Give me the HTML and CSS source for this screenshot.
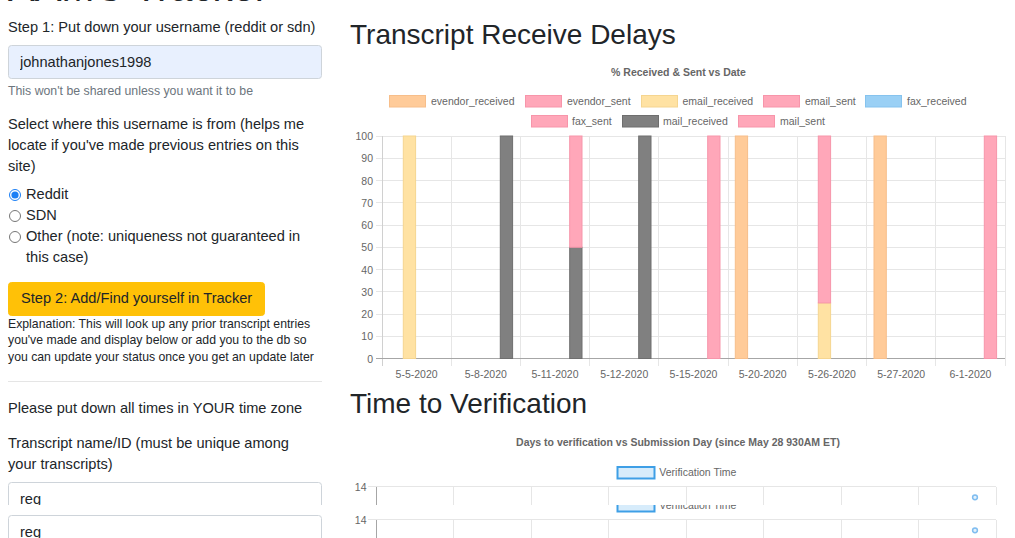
FILE: index.html
```html
<!DOCTYPE html>
<html lang="en">
<head>
<meta charset="utf-8">
<title>AAMC Tracker</title>
<link rel="stylesheet" href="styles.css">
</head>
<body>
<div class="viewport">
  <div class="page">
    <div class="col-left">
      <h1 class="site-title">AAMC Tracker</h1>
      <div class="form-group">
        <label class="lbl">Step 1: Put down your username (reddit or sdn)</label>
        <input class="form-control autofill" type="text" value="johnathanjones1998">
        <small class="form-text">This won't be shared unless you want it to be</small>
      </div>
      <div class="form-group">
        <label class="lbl">Select where this username is from (helps me locate if you've made previous entries on this site)</label>
        <div class="form-check"><input type="radio" name="src" checked><span>Reddit</span></div>
        <div class="form-check"><input type="radio" name="src"><span>SDN</span></div>
        <div class="form-check"><input type="radio" name="src"><span>Other (note: uniqueness not guaranteed in this case)</span></div>
      </div>
      <button class="btn btn-warning" type="button">Step 2: Add/Find yourself in Tracker</button>
      <p class="explain">Explanation: This will look up any prior transcript entries you've made and display below or add you to the db so you can update your status once you get an update later</p>
      <hr class="divider">
      <p class="note">Please put down all times in YOUR time zone</p>
      <label class="lbl narrow">Transcript name/ID (must be unique among your transcripts)</label>
      <input class="form-control" type="text" value="reg">
    </div>
    <div class="col-right">
      <h2 class="section-title first">Transcript Receive Delays</h2>
      <svg class="chart chart1" width="665" height="330" viewBox="0 0 665 330" xmlns="http://www.w3.org/2000/svg">
        <text class="c-title" x="328.5" y="17" text-anchor="middle">% Received &amp; Sent vs Date</text>
        <g class="legend">
          <rect x="39.5" y="40.5" width="36" height="11.5" fill="#ffcb99" stroke="#f7be8a"/>
          <text x="81" y="46">evendor_received</text>
          <rect x="175.5" y="40.5" width="36" height="11.5" fill="#ffa7b9" stroke="#f795aa"/>
          <text x="217" y="46">evendor_sent</text>
          <rect x="291.5" y="40.5" width="36" height="11.5" fill="#ffe2a3" stroke="#f5d590"/>
          <text x="332.5" y="46">email_received</text>
          <rect x="413.5" y="40.5" width="36" height="11.5" fill="#ffa7b9" stroke="#f795aa"/>
          <text x="455" y="46">email_sent</text>
          <rect x="515.5" y="40.5" width="36" height="11.5" fill="#9ad0f5" stroke="#86c3ee"/>
          <text x="557" y="46">fax_received</text>
          <rect x="181.5" y="60.5" width="36" height="11.5" fill="#ffa7b9" stroke="#f795aa"/>
          <text x="222" y="66">fax_sent</text>
          <rect x="272.5" y="60.5" width="36" height="11.5" fill="#808080" stroke="#6e6e6e"/>
          <text x="313" y="66">mail_received</text>
          <rect x="388.5" y="60.5" width="36" height="11.5" fill="#ffa7b9" stroke="#f795aa"/>
          <text x="430" y="66">mail_sent</text>
        </g>
        <g class="grid" shape-rendering="crispEdges">
          <line x1="26" y1="81" x2="655" y2="81"/>
          <line x1="26" y1="103.25" x2="655" y2="103.25"/>
          <line x1="26" y1="125.5" x2="655" y2="125.5"/>
          <line x1="26" y1="147.75" x2="655" y2="147.75"/>
          <line x1="26" y1="170" x2="655" y2="170"/>
          <line x1="26" y1="192.25" x2="655" y2="192.25"/>
          <line x1="26" y1="214.5" x2="655" y2="214.5"/>
          <line x1="26" y1="236.75" x2="655" y2="236.75"/>
          <line x1="26" y1="259" x2="655" y2="259"/>
          <line x1="26" y1="281.25" x2="655" y2="281.25"/>
          <line x1="101.2" y1="81" x2="101.2" y2="311"/>
          <line x1="170.4" y1="81" x2="170.4" y2="311"/>
          <line x1="239.7" y1="81" x2="239.7" y2="311"/>
          <line x1="308.9" y1="81" x2="308.9" y2="311"/>
          <line x1="378.1" y1="81" x2="378.1" y2="311"/>
          <line x1="447.3" y1="81" x2="447.3" y2="311"/>
          <line x1="516.6" y1="81" x2="516.6" y2="311"/>
          <line x1="585.8" y1="81" x2="585.8" y2="311"/>
          <line x1="655" y1="81" x2="655" y2="311"/>
          <line class="axis" x1="32" y1="81" x2="32" y2="311"/>
          <line class="zero" x1="26" y1="303.5" x2="655" y2="303.5"/>
        </g>
        <g class="ylabels" text-anchor="end">
          <text x="23" y="81">100</text>
          <text x="23" y="103.25">90</text>
          <text x="23" y="125.5">80</text>
          <text x="23" y="147.75">70</text>
          <text x="23" y="170">60</text>
          <text x="23" y="192.25">50</text>
          <text x="23" y="214.5">40</text>
          <text x="23" y="236.75">30</text>
          <text x="23" y="259">20</text>
          <text x="23" y="281.25">10</text>
          <text x="23" y="303.5">0</text>
        </g>
        <g class="bars">
          <rect x="53.3" y="81" width="12.3" height="222.5" fill="#ffe2a3" stroke="#f5d590"/>
          <rect x="150.3" y="81" width="12.3" height="222.5" fill="#808080" stroke="#6e6e6e"/>
          <rect x="219.7" y="192.25" width="12.3" height="111.25" fill="#808080" stroke="#6e6e6e"/>
          <rect x="219.7" y="81" width="12.3" height="111.25" fill="#ffa7b9" stroke="#f795aa"/>
          <rect x="288.7" y="81" width="12.3" height="222.5" fill="#808080" stroke="#6e6e6e"/>
          <rect x="357.7" y="81" width="12.3" height="222.5" fill="#ffa7b9" stroke="#f795aa"/>
          <rect x="385.3" y="81" width="12.3" height="222.5" fill="#ffcb99" stroke="#f7be8a"/>
          <rect x="468.3" y="247.9" width="12.3" height="55.6" fill="#ffe2a3" stroke="#f5d590"/>
          <rect x="468.3" y="81" width="12.3" height="166.9" fill="#ffa7b9" stroke="#f795aa"/>
          <rect x="524" y="81" width="12.3" height="222.5" fill="#ffcb99" stroke="#f7be8a"/>
          <rect x="634.3" y="81" width="12.3" height="222.5" fill="#ffa7b9" stroke="#f795aa"/>
        </g>
        <g class="xlabels" text-anchor="middle">
          <text x="66.6" y="319">5-5-2020</text>
          <text x="135.8" y="319">5-8-2020</text>
          <text x="205" y="319">5-11-2020</text>
          <text x="274.3" y="319">5-12-2020</text>
          <text x="343.5" y="319">5-15-2020</text>
          <text x="412.7" y="319">5-20-2020</text>
          <text x="482" y="319">5-26-2020</text>
          <text x="551.2" y="319">5-27-2020</text>
          <text x="620.4" y="319">6-1-2020</text>
        </g>
      </svg>
      <h2 class="section-title">Time to Verification</h2>
      <svg class="chart chart2" width="665" height="80" viewBox="0 0 665 80" xmlns="http://www.w3.org/2000/svg">
        <g id="c2">
          <text class="c-title" x="328" y="17.3" text-anchor="middle">Days to verification vs Submission Day (since May 28 930AM ET)</text>
          <rect x="267.5" y="42" width="37" height="11.5" fill="#d7ecfb" stroke="#3e9fe6" stroke-width="2"/>
          <text class="lg" x="309.3" y="47">Verification Time</text>
          <g class="grid" shape-rendering="crispEdges">
            <line x1="18" y1="61.5" x2="646" y2="61.5"/>
            <line x1="103.5" y1="61.5" x2="103.5" y2="120"/>
            <line x1="181" y1="61.5" x2="181" y2="120"/>
            <line x1="258.5" y1="61.5" x2="258.5" y2="120"/>
            <line x1="336" y1="61.5" x2="336" y2="120"/>
            <line x1="413.5" y1="61.5" x2="413.5" y2="120"/>
            <line x1="491" y1="61.5" x2="491" y2="120"/>
            <line x1="568.5" y1="61.5" x2="568.5" y2="120"/>
            <line x1="646" y1="61.5" x2="646" y2="120"/>
            <line class="axis2" x1="26" y1="61.5" x2="26" y2="120"/>
          </g>
          <text class="ylab2" x="16.5" y="62" text-anchor="end">14</text>
          <circle cx="625" cy="72.3" r="2.4" fill="#e3f1fc" stroke="#7fbdf0" stroke-width="1.5"/>
        </g>
      </svg>
    </div>
  </div>
  <div class="page replay">
    <div class="col-left">
      <input class="form-control replay-input" type="text" value="reg">
    </div>
    <div class="col-right">
      <svg class="chart" width="665" height="33" viewBox="0 47 665 33" xmlns="http://www.w3.org/2000/svg" xmlns:xlink="http://www.w3.org/1999/xlink">
        <use href="#c2" xlink:href="#c2"/>
      </svg>
    </div>
  </div>
</div>
</body>
</html>
```

FILE: styles.css
```css
* { box-sizing: border-box; }

html, body {
  margin: 0;
  padding: 0;
  background: #fff;
}

body {
  font-family: "Liberation Sans", Arial, Helvetica, sans-serif;
  font-size: 14.6px;
  line-height: 21px;
  color: #212529;
}

.viewport {
  width: 1015px;
  height: 538px;
  overflow: hidden;
}

.page {
  display: flex;
  gap: 28px;
  padding-left: 8px;
  height: 505px;
  overflow: hidden;
}

.page.replay {
  height: 33px;
}

.col-left {
  width: 314px;
  flex: none;
}

.col-right {
  width: 665px;
  flex: none;
}

.site-title {
  font-size: 40px;
  line-height: 48px;
  font-weight: 500;
  margin: -37.5px 0 6px;
  height: 48px;
}

.form-group {
  margin-bottom: 14px;
}

.lbl {
  display: block;
  margin-bottom: 7px;
}

.lbl.narrow {
  max-width: 300px;
}

.form-control {
  display: block;
  width: 100%;
  height: 34px;
  padding: 0 11px;
  font: inherit;
  color: #212529;
  background: #fff;
  border: 1px solid #ced4da;
  border-radius: 3.5px;
  outline: none;
}

.form-control.autofill {
  background: #e8f0fe;
}

.replay-input {
  margin-top: 10px;
}

.form-text {
  display: block;
  margin-top: 3.5px;
  font-size: 12.3px;
  line-height: 18px;
  color: #6c757d;
}

.form-check {
  display: flex;
  align-items: flex-start;
}

.form-check input {
  flex: none;
  width: 12px;
  height: 12px;
  margin: 4.5px 5px 0 1px;
  accent-color: #1b7ff5;
}

.btn {
  display: inline-block;
  font: inherit;
  line-height: 21px;
  padding: 5.25px 12px;
  border-radius: 3.5px;
  cursor: pointer;
}

.btn-warning {
  background: #ffc107;
  border: 1px solid #ffc107;
  color: #212529;
}

.explain {
  margin: 0;
  font-size: 12.25px;
  line-height: 16.5px;
}

.divider {
  border: 0;
  border-top: 1px solid rgba(0, 0, 0, 0.1);
  margin: 15.5px 0 16.5px;
}

.note {
  margin: 0 0 14px;
}

.section-title {
  font-size: 28px;
  line-height: 34px;
  font-weight: 500;
  margin: 2px 0 4px;
}

.section-title.first {
  margin: 18px 0 3px;
}

.chart {
  display: block;
  overflow: hidden;
  font-family: "Liberation Sans", Arial, Helvetica, sans-serif;
}

.chart text {
  font-size: 10.5px;
  fill: #666;
  dominant-baseline: central;
}

.chart .c-title {
  font-weight: bold;
}

.grid line {
  stroke: #e6e6e6;
  stroke-width: 1;
}

.grid .axis {
  stroke: #d0d0d0;
}

.grid .zero {
  stroke: #a6a6a6;
}

.grid .axis2 {
  stroke: #a6a6a6;
}
```
